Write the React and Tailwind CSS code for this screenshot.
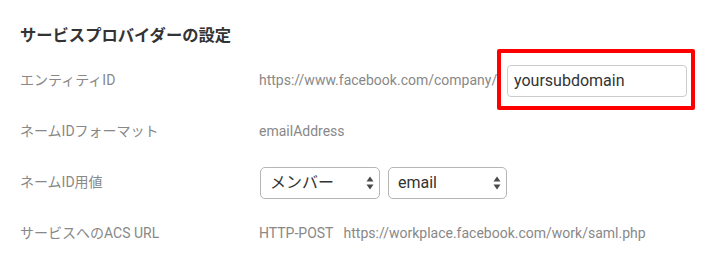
import React from "react";

const font = { fontFamily: '"Roboto", "Noto Sans CJK JP", sans-serif' };

function Arrows() {
  return (
    <svg width="8" height="14" viewBox="0 0 8 14" className="shrink-0">
      <path d="M4 0.5 L7.5 5.5 L0.5 5.5 Z" fill="#4a4a4a" />
      <path d="M4 13.5 L7.5 8.5 L0.5 8.5 Z" fill="#4a4a4a" />
    </svg>
  );
}

function Select({ label, width }) {
  return (
    <div
      className={`flex items-center justify-between h-[32px] rounded-[5px] border border-[#b5b5b5] bg-white pl-[9px] pr-[5px] text-[16px] text-[#333] ${width}`}
    >
      <span>{label}</span>
      <Arrows />
    </div>
  );
}

function Row({ label, children }) {
  return (
    <div className="flex items-center h-[51px]">
      <div className="w-[239px] shrink-0 text-[14px] text-[#888]">{label}</div>
      <div className="flex items-center text-[14px] text-[#888]">{children}</div>
    </div>
  );
}

export default function App() {
  return (
    <div className="w-[720px] h-[263px] bg-white overflow-hidden" style={font}>
      <div className="pl-[20px] pt-[26px]">
        <div className="text-[16.3px] leading-[20px] font-bold text-[#333] mb-[9px]">
          サービスプロバイダーの設定
        </div>
        <Row label="エンティティID">
          <span className="w-[248px] shrink-0">https://www.facebook.com/company/</span>
          <div className="relative">
            <div className="w-[180px] h-[32px] rounded-[4px] border border-[#cccccc] bg-white flex items-center pl-[6px] text-[16px] text-[#333]">
              yoursubdomain
            </div>
            <div className="absolute left-[-10px] top-[-16px] right-[-8px] bottom-[-13px] border-[4.5px] border-[#ff0000] rounded-[2px]" />
          </div>
        </Row>
        <Row label="ネームIDフォーマット">
          <span>emailAddress</span>
        </Row>
        <Row label="ネームID用値">
          <div className="flex items-center gap-[8px] ml-[1px]">
            <Select label="メンバー" width="w-[120px]" />
            <Select label="email" width="w-[119px]" />
          </div>
        </Row>
        <Row label="サービスへのACS URL">
          <span className="whitespace-pre">HTTP-POST   https://workplace.facebook.com/work/saml.php</span>
        </Row>
      </div>
    </div>
  );
}
